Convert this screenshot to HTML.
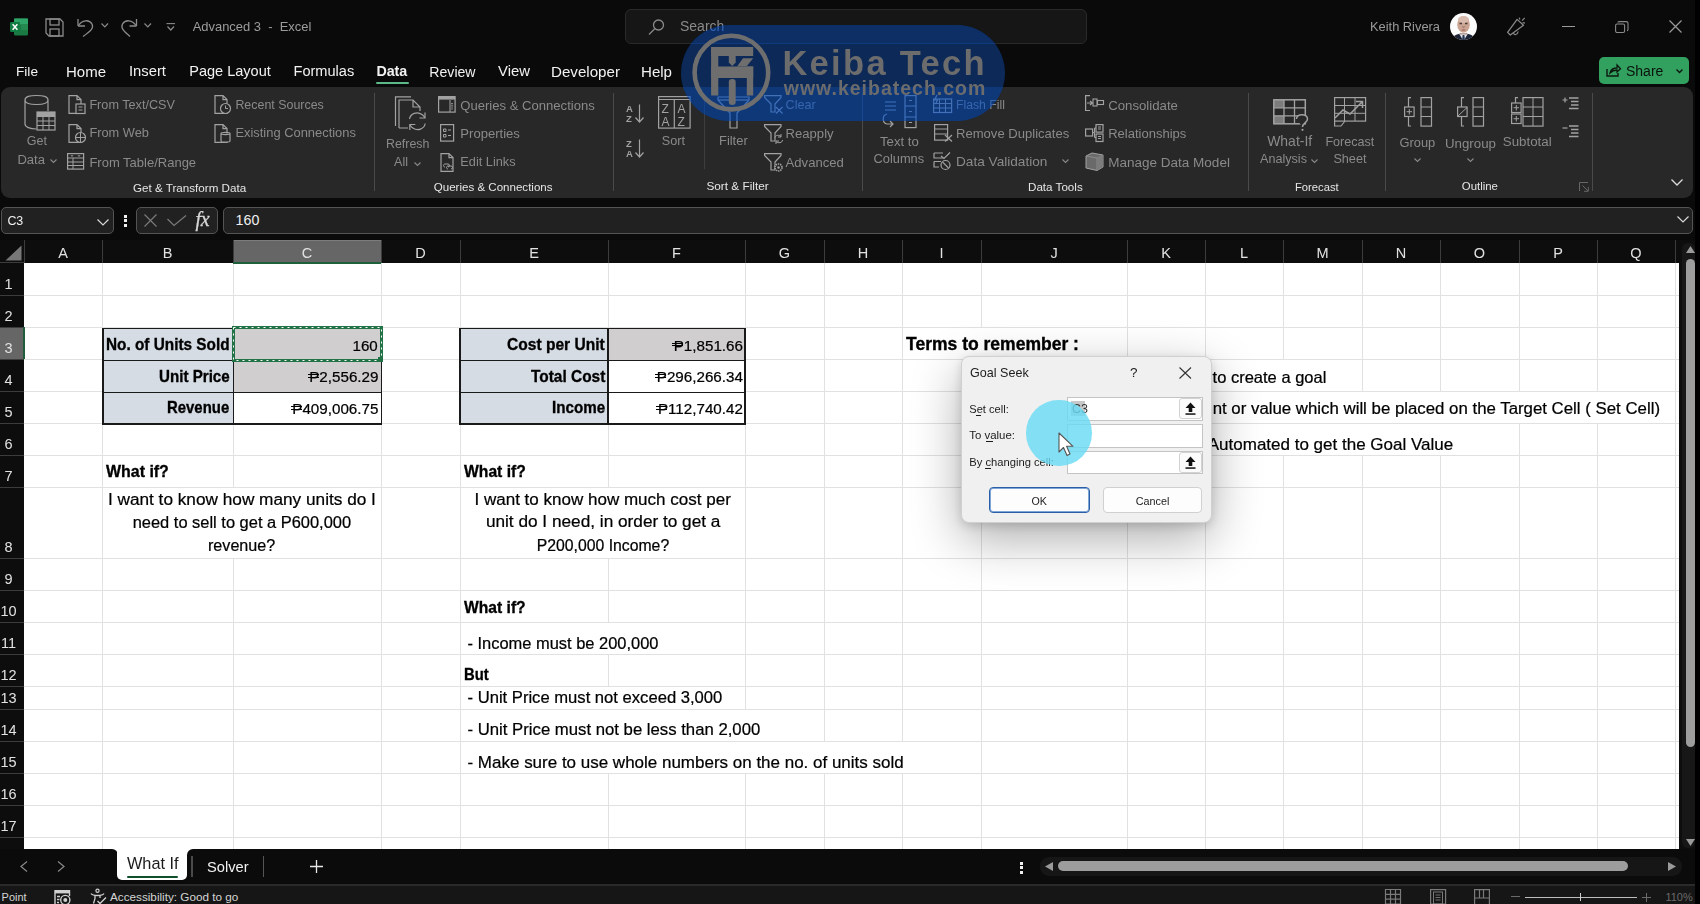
<!DOCTYPE html><html><head><meta charset="utf-8"><style>
html,body{margin:0;padding:0;width:1700px;height:904px;overflow:hidden;background:#0a0a0a;}
body{position:relative;font-family:"Liberation Sans",sans-serif;}
.t{position:absolute;white-space:pre;line-height:1;}
svg{display:block}
</style></head><body>

<svg style="position:absolute;left:10px;top:18px;overflow:visible;" width="19" height="19" viewBox="0 0 19 19"><rect x="4" y="0.5" width="14" height="17" rx="1.5" fill="#1b7a43"/>
<rect x="4" y="0.5" width="14" height="6" fill="#2fa56a"/><rect x="11" y="6" width="7" height="6" fill="#23894f"/>
<rect x="0" y="4" width="10" height="10" rx="1.2" fill="#107c41"/>
<path d="M2.6 6.3 L7.4 11.7 M7.4 6.3 L2.6 11.7" stroke="#fff" stroke-width="1.5"/></svg>
<svg style="position:absolute;left:45px;top:18px;overflow:visible;" width="19" height="19" viewBox="0 0 19 19"><path d="M1 1 H15 L18 4 V18 H4 L1 15 Z" fill="none" stroke="#8a8a8a" stroke-width="1.3"/><rect x="5" y="1" width="9" height="6" fill="none" stroke="#8a8a8a" stroke-width="1.3"/><rect x="5" y="11" width="9" height="7" fill="none" stroke="#8a8a8a" stroke-width="1.3"/></svg>
<svg style="position:absolute;left:77px;top:17px;overflow:visible;" width="30" height="20" viewBox="0 0 30 20"><path d="M1 9 L1 2 M1 9 L8 9" stroke="#8a8a8a" stroke-width="1.3" fill="none"/><path d="M1.5 8.5 C5 3 12 2 15 7 C17 11 14 14 6 19.5" stroke="#8a8a8a" stroke-width="1.3" fill="none"/><path d="M24 24" /><path d="M101 24" /></svg>
<svg style="position:absolute;left:101px;top:23px;overflow:visible;" width="8" height="5" viewBox="0 0 8 5"><path d="M0.5 0.5 L3.8 3.8 L7 0.5" stroke="#8a8a8a" stroke-width="1.2" fill="none"/></svg>
<svg style="position:absolute;left:120px;top:17px;overflow:visible;" width="18" height="20" viewBox="0 0 18 20"><path d="M16.5 9 L16.5 2 M16.5 9 L9.5 9" stroke="#8a8a8a" stroke-width="1.3" fill="none"/><path d="M16 8.5 C12.5 3 5.5 2 2.5 7 C0.5 11 3.5 14 10 19.5" stroke="#8a8a8a" stroke-width="1.3" fill="none"/></svg>
<svg style="position:absolute;left:144px;top:23px;overflow:visible;" width="8" height="5" viewBox="0 0 8 5"><path d="M0.5 0.5 L3.8 3.8 L7 0.5" stroke="#8a8a8a" stroke-width="1.2" fill="none"/></svg>
<svg style="position:absolute;left:166px;top:23px;overflow:visible;" width="10" height="9" viewBox="0 0 10 9"><path d="M0.5 0.6 H9" stroke="#8a8a8a" stroke-width="1.1"/><path d="M1.5 3.5 L4.8 7 L8 3.5" stroke="#8a8a8a" stroke-width="1.2" fill="none"/></svg>
<div class="t" style="left:192.70px;top:20.84px;font-size:12.953px;color:#9c9c9c;">Advanced 3  -  Excel</div>
<div style="position:absolute;left:625px;top:9px;width:462px;height:35px;background:#161616;border:1px solid #2a2a2a;border-radius:6px;box-sizing:border-box;"></div>
<svg style="position:absolute;left:648px;top:19px;overflow:visible;" width="17" height="17" viewBox="0 0 17 17"><circle cx="10.5" cy="6" r="5" fill="none" stroke="#8a8a8a" stroke-width="1.3"/><path d="M7 9.5 L1 15.5" stroke="#8a8a8a" stroke-width="1.3"/></svg>
<div class="t" style="left:680.00px;top:19.04px;font-size:14.013px;color:#8a8a8a;">Search</div>
<div class="t" style="left:1370.00px;top:21.42px;font-size:12.852px;color:#9a9a9a;">Keith Rivera</div>
<svg style="position:absolute;left:1450px;top:13px;overflow:visible;" width="28" height="28" viewBox="0 0 28 28"><defs><clipPath id="av"><circle cx="13.5" cy="13.5" r="13.5"/></clipPath></defs>
<circle cx="13.5" cy="13.5" r="13.5" fill="#fbfbfb"/>
<g clip-path="url(#av)"><path d="M1 29 C3 22 7 20.5 13.5 20.5 C20 20.5 24 22 26 29 Z" fill="#1c2336"/>
<path d="M9 20.5 L13.5 28 L18 20.5 Z" fill="#dfe6f0"/><path d="M12.6 22 L14.4 22 L15 28 L12 28 Z" fill="#2a3550"/>
<ellipse cx="13.5" cy="11.5" rx="6.3" ry="8.2" fill="#cba593"/><ellipse cx="13.5" cy="6.5" rx="5.5" ry="3.5" fill="#d9bcae"/>
<path d="M9.5 10.5 H12 M15 10.5 H17.5" stroke="#4a3a34" stroke-width="1.3"/><path d="M12.5 13 L13.5 15 L14.5 13" stroke="#9a7060" stroke-width="0.8" fill="none"/><ellipse cx="13.5" cy="17" rx="2.2" ry="1.1" fill="#b07a70"/>
<path d="M10 19.5 C11 20.8 16 20.8 17 19.5 V21.5 H10 Z" fill="#b89080"/></g></svg>
<svg style="position:absolute;left:1507px;top:17px;overflow:visible;" width="20" height="20" viewBox="0 0 20 20"><path d="M0.6 15.4 L10.1 2.4 L16.5 8.3 L3.3 18 Z" fill="none" stroke="#8a8a8a" stroke-width="1.25" stroke-linejoin="round"/><path d="M6.5 16.2 C7 18.2 10.5 18.2 11.2 14.5" fill="none" stroke="#8a8a8a" stroke-width="1.2"/><path d="M12.2 0.6 L12.9 2.5 M15.1 3.6 L17.7 0.9 M15.6 5.6 L17.9 6.1" stroke="#8a8a8a" stroke-width="1.2"/></svg>
<div style="position:absolute;left:1562px;top:26px;width:13px;height:1px;background:#9a9a9a;"></div>
<svg style="position:absolute;left:1615px;top:21px;overflow:visible;" width="14" height="12" viewBox="0 0 14 12"><rect x="0.6" y="3" width="9" height="8.5" rx="1.5" fill="none" stroke="#8a8a8a" stroke-width="1.1"/><path d="M3 1.5 C3 0.8 3.5 0.6 4.5 0.6 H11 C12.5 0.6 13 1 13 2.5 V8.5 C13 9.2 12.7 9.6 12 9.6" fill="none" stroke="#8a8a8a" stroke-width="1.1"/></svg>
<svg style="position:absolute;left:1669px;top:20px;overflow:visible;" width="13" height="13" viewBox="0 0 13 13"><path d="M0.5 0.5 L12.5 12.5 M12.5 0.5 L0.5 12.5" stroke="#9a9a9a" stroke-width="1.2"/></svg>
<div style="position:absolute;left:1695px;top:0px;width:5px;height:904px;background:#000;"></div>
<div class="t" style="left:16.00px;top:64.94px;font-size:13.653px;color:#f2f2f2;">File</div>
<div class="t" style="left:66.00px;top:63.81px;font-size:14.995px;color:#f2f2f2;">Home</div>
<div class="t" style="left:129.00px;top:63.98px;font-size:14.794px;color:#f2f2f2;">Insert</div>
<div class="t" style="left:189.20px;top:64.18px;font-size:14.548px;color:#f2f2f2;">Page Layout</div>
<div class="t" style="left:293.50px;top:64.15px;font-size:14.589px;color:#f2f2f2;">Formulas</div>
<div class="t" style="left:429.30px;top:64.55px;font-size:14.121px;color:#f2f2f2;">Review</div>
<div class="t" style="left:498.00px;top:63.90px;font-size:14.888px;color:#f2f2f2;">View</div>
<div class="t" style="left:551.00px;top:63.69px;font-size:15.138px;color:#f2f2f2;">Developer</div>
<div class="t" style="left:641.00px;top:63.74px;font-size:15.073px;color:#f2f2f2;">Help</div>
<div class="t" style="left:376.40px;top:64.43px;font-size:14.256px;color:#f2f2f2;font-weight:bold;">Data</div>
<div style="position:absolute;left:376px;top:82px;width:33px;height:2px;background:#5bb98a;border-radius:1px;"></div>
<div style="position:absolute;left:1599px;top:57px;width:90px;height:27px;background:#32a05e;border-radius:5px;"></div>
<svg style="position:absolute;left:1606px;top:64px;overflow:visible;" width="15" height="13" viewBox="0 0 15 13"><path d="M1 5 V12 H12 V9" fill="none" stroke="#0d1a10" stroke-width="1.4"/><path d="M4 9 C5 5 8 4 11 4 L11 1 L14.5 4.7 L11 8 V6 C8.5 6 6 7 4 9 Z" fill="none" stroke="#0d1a10" stroke-width="1.3"/></svg>
<div class="t" style="left:1626.00px;top:64.34px;font-size:14.015px;color:#0b130d;">Share</div>
<svg style="position:absolute;left:1676px;top:69px;overflow:visible;" width="7" height="5" viewBox="0 0 7 5"><path d="M0.5 0.5 L3.5 3.5 L6.5 0.5" stroke="#0b130d" stroke-width="1.3" fill="none"/></svg>
<div style="position:absolute;left:1px;top:87px;width:1692px;height:111px;background:#282828;border-radius:9px;"></div>
<div style="position:absolute;left:374px;top:93px;width:1px;height:98px;background:#4a4a4a;"></div>
<div style="position:absolute;left:613px;top:93px;width:1px;height:98px;background:#4a4a4a;"></div>
<div style="position:absolute;left:862px;top:93px;width:1px;height:98px;background:#4a4a4a;"></div>
<div style="position:absolute;left:1248px;top:93px;width:1px;height:98px;background:#4a4a4a;"></div>
<div style="position:absolute;left:1385px;top:93px;width:1px;height:98px;background:#4a4a4a;"></div>
<div style="position:absolute;left:1592px;top:93px;width:1px;height:98px;background:#4a4a4a;"></div>
<div style="position:absolute;left:704px;top:98px;width:1px;height:71px;background:#3e3e3e;"></div>
<div class="t" style="left:133.00px;top:181.64px;font-size:11.650px;color:#e6e6e6;">Get &amp; Transform Data</div>
<div class="t" style="left:433.80px;top:181.52px;font-size:11.553px;color:#e6e6e6;">Queries &amp; Connections</div>
<div class="t" style="left:706.40px;top:181.31px;font-size:11.802px;color:#e6e6e6;">Sort &amp; Filter</div>
<div class="t" style="left:1028.00px;top:181.14px;font-size:11.643px;color:#e6e6e6;">Data Tools</div>
<div class="t" style="left:1295.00px;top:181.89px;font-size:11.233px;color:#e6e6e6;">Forecast</div>
<div class="t" style="left:1461.80px;top:181.23px;font-size:11.425px;color:#e6e6e6;">Outline</div>
<svg style="position:absolute;left:24px;top:95px;overflow:visible;" width="32" height="37" viewBox="0 0 32 37"><path d="M1 5 V29 C1 32 6 34 12.5 34 M1 5 C1 1.5 6 0.5 12.5 0.5 C19 0.5 24 1.5 24 5 C24 8 19 9.5 12.5 9.5 C6 9.5 1 8 1 5 M24 5 V16" fill="none" stroke="#a2a2a2" stroke-width="1.2"/>
<rect x="13" y="17" width="18" height="18" fill="#282828" stroke="#a2a2a2" stroke-width="1.2"/><path d="M13 21.5 H31 M13 26 H31 M13 30.5 H31 M19 17 V35 M25 17 V35" stroke="#a2a2a2" stroke-width="1"/><rect x="13" y="17" width="18" height="4.5" fill="#a2a2a2"/></svg>
<div class="t" style="left:26.80px;top:135.19px;font-size:12.532px;color:#8a8a8a;">Get</div>
<div class="t" style="left:17.40px;top:152.64px;font-size:13.066px;color:#8a8a8a;">Data</div>
<svg style="position:absolute;left:50px;top:159px;overflow:visible;" width="7" height="4" viewBox="0 0 7 4"><path d="M0.5 0.5 L3.5 3.5 L6.5 0.5" stroke="#8a8a8a" stroke-width="1.1" fill="none"/></svg>
<svg style="position:absolute;left:68px;top:95px;overflow:visible;" width="18" height="19" viewBox="0 0 18 19"><path d="M1 0.6 H9 L13 4.6 V18.4 H1 Z M9 0.6 V4.6 H13" fill="none" stroke="#a2a2a2" stroke-width="1.2"/><rect x="8" y="9" width="9" height="9.5" fill="#282828" stroke="#a2a2a2" stroke-width="1.2"/><path d="M10.5 12 H14.5 M10.5 15 H14.5" stroke="#a2a2a2" stroke-width="1"/></svg>
<svg style="position:absolute;left:68px;top:124px;overflow:visible;" width="18" height="19" viewBox="0 0 18 19"><path d="M1 0.6 H9 L13 4.6 V18.4 H1 Z M9 0.6 V4.6 H13" fill="none" stroke="#a2a2a2" stroke-width="1.2"/><circle cx="12.5" cy="13.5" r="5" fill="#282828" stroke="#a2a2a2" stroke-width="1.2"/><path d="M7.5 13.5 H17.5 M12.5 8.5 V18.5" stroke="#a2a2a2" stroke-width="1"/></svg>
<svg style="position:absolute;left:67px;top:153px;overflow:visible;" width="18" height="17" viewBox="0 0 18 17"><rect x="0.6" y="0.6" width="16" height="15.5" fill="none" stroke="#a2a2a2" stroke-width="1.2"/><path d="M0.6 5 H16.6 M0.6 9 H16.6 M0.6 12.5 H16.6 M6 5 V16" stroke="#a2a2a2" stroke-width="1"/><path d="M4 2 L5 3.5 L6 2 M11 2 L12 3.5 L13 2" stroke="#a2a2a2" stroke-width="0.8" fill="none"/></svg>
<div class="t" style="left:89.40px;top:98.88px;font-size:12.661px;color:#8a8a8a;">From Text/CSV</div>
<div class="t" style="left:89.40px;top:127.15px;font-size:12.820px;color:#8a8a8a;">From Web</div>
<div class="t" style="left:89.40px;top:155.99px;font-size:13.012px;color:#8a8a8a;">From Table/Range</div>
<svg style="position:absolute;left:214px;top:95px;overflow:visible;" width="18" height="19" viewBox="0 0 18 19"><path d="M1 0.6 H9 L13 4.6 V18.4 H1 Z M9 0.6 V4.6 H13" fill="none" stroke="#a2a2a2" stroke-width="1.2"/><circle cx="11.5" cy="13.5" r="5" fill="#282828" stroke="#a2a2a2" stroke-width="1.2"/><path d="M11.5 10.5 V13.5 H14" stroke="#a2a2a2" stroke-width="1" fill="none"/></svg>
<svg style="position:absolute;left:214px;top:124px;overflow:visible;" width="18" height="19" viewBox="0 0 18 19"><path d="M1 0.6 H9 L13 4.6 V18.4 H1 Z M9 0.6 V4.6 H13" fill="none" stroke="#a2a2a2" stroke-width="1.2"/><path d="M7 9.5 C7 8 16 8 16 9.5 V17 C16 18.5 7 18.5 7 17 Z M7 9.5 C7 11 16 11 16 9.5" fill="#282828" stroke="#a2a2a2" stroke-width="1.2"/></svg>
<div class="t" style="left:235.40px;top:99.07px;font-size:12.439px;color:#8a8a8a;">Recent Sources</div>
<div class="t" style="left:235.40px;top:127.07px;font-size:12.914px;color:#8a8a8a;">Existing Connections</div>
<svg style="position:absolute;left:394px;top:96px;overflow:visible;" width="34" height="35" viewBox="0 0 34 35"><path d="M1.5 30 V0.8 H17" fill="none" stroke="#a2a2a2" stroke-width="1.2"/><path d="M5 32 V4 H19 L26 11 V15 M19 4 V11 H26 M5 32 H14" fill="none" stroke="#a2a2a2" stroke-width="1.2"/>
<path d="M15.5 23 C16.5 17.5 23 15 28 18.5 C29.3 19.4 30.2 20.5 30.8 21.8" fill="none" stroke="#a2a2a2" stroke-width="1.2"/><path d="M31 16.5 V22 H25.5" fill="none" stroke="#a2a2a2" stroke-width="1.2"/>
<path d="M31.2 27.5 C30.2 33 23.8 35.5 18.8 32 C17.5 31.1 16.6 30 16 28.7" fill="none" stroke="#a2a2a2" stroke-width="1.2"/><path d="M15.8 34 V28.5 H21.3" fill="none" stroke="#a2a2a2" stroke-width="1.2"/></svg>
<div class="t" style="left:386.00px;top:138.48px;font-size:12.423px;color:#8a8a8a;">Refresh</div>
<div class="t" style="left:394.00px;top:156.34px;font-size:12.597px;color:#8a8a8a;">All</div>
<svg style="position:absolute;left:414px;top:162px;overflow:visible;" width="7" height="4" viewBox="0 0 7 4"><path d="M0.5 0.5 L3.5 3.5 L6.5 0.5" stroke="#8a8a8a" stroke-width="1.1" fill="none"/></svg>
<svg style="position:absolute;left:438px;top:96px;overflow:visible;" width="18" height="17" viewBox="0 0 18 17"><rect x="0.6" y="0.6" width="16.5" height="15.5" fill="none" stroke="#a2a2a2" stroke-width="1.2"/><rect x="0.6" y="0.6" width="16.5" height="3" fill="#a2a2a2"/><path d="M12 4 V16" stroke="#a2a2a2" stroke-width="1"/><path d="M14 7 V14" stroke="#a2a2a2" stroke-width="1.5" stroke-dasharray="1.2 1"/></svg>
<svg style="position:absolute;left:440px;top:124px;overflow:visible;" width="15" height="18" viewBox="0 0 15 18"><rect x="0.6" y="0.6" width="13" height="16.5" fill="none" stroke="#a2a2a2" stroke-width="1.2"/><path d="M3.5 5 H6 V7.5 H3.5 Z M3.5 10.5 H6 V13 H3.5 Z M8 6 H11 M8 11.5 H11" stroke="#a2a2a2" stroke-width="1" fill="none"/></svg>
<svg style="position:absolute;left:440px;top:153px;overflow:visible;" width="18" height="19" viewBox="0 0 18 19"><path d="M1 0.6 H9 L13 4.6 V18.4 H1 Z M9 0.6 V4.6 H13" fill="none" stroke="#a2a2a2" stroke-width="1.2"/><path d="M5 14 C3 14 3 11 5 11 H8 C10 11 10 14 8 14 M8 16 C6 16 6 13 8 13 H11 C13 13 13 16 11 16" fill="none" stroke="#a2a2a2" stroke-width="1"/></svg>
<div class="t" style="left:460.30px;top:98.62px;font-size:13.089px;color:#8a8a8a;">Queries &amp; Connections</div>
<div class="t" style="left:460.30px;top:126.91px;font-size:13.099px;color:#8a8a8a;">Properties</div>
<div class="t" style="left:460.30px;top:156.20px;font-size:12.755px;color:#8a8a8a;">Edit Links</div>
<svg style="position:absolute;left:626px;top:104px;overflow:visible;" width="20" height="19" viewBox="0 0 20 19"><text x="0" y="8" font-family="Liberation Sans" font-size="9.5" font-weight="bold" fill="#a2a2a2">A</text><text x="0" y="18" font-family="Liberation Sans" font-size="9.5" font-weight="bold" fill="#a2a2a2">Z</text><path d="M13.5 0.5 V18 M9.5 13.5 L13.5 18 L17.5 13.5" fill="none" stroke="#a2a2a2" stroke-width="1.2"/></svg>
<svg style="position:absolute;left:626px;top:139px;overflow:visible;" width="20" height="19" viewBox="0 0 20 19"><text x="0" y="8" font-family="Liberation Sans" font-size="9.5" font-weight="bold" fill="#a2a2a2">Z</text><text x="0" y="18" font-family="Liberation Sans" font-size="9.5" font-weight="bold" fill="#a2a2a2">A</text><path d="M13.5 0.5 V18 M9.5 13.5 L13.5 18 L17.5 13.5" fill="none" stroke="#a2a2a2" stroke-width="1.2"/></svg>
<svg style="position:absolute;left:658px;top:96px;overflow:visible;" width="33" height="33" viewBox="0 0 33 33"><rect x="0.6" y="0.6" width="31.5" height="31.5" fill="none" stroke="#a2a2a2" stroke-width="1.2"/><path d="M0.6 3.5 H32 M16.3 3.5 V32" stroke="#a2a2a2" stroke-width="1.2"/>
<text x="3.5" y="17" font-family="Liberation Sans" font-size="12" fill="#a2a2a2">Z</text><text x="3.5" y="30" font-family="Liberation Sans" font-size="12" fill="#a2a2a2">A</text><text x="19.5" y="17" font-family="Liberation Sans" font-size="12" fill="#a2a2a2">A</text><text x="19.5" y="30" font-family="Liberation Sans" font-size="12" fill="#a2a2a2">Z</text></svg>
<div class="t" style="left:661.80px;top:135.49px;font-size:12.650px;color:#8a8a8a;">Sort</div>
<svg style="position:absolute;left:717px;top:96px;overflow:visible;" width="33" height="33" viewBox="0 0 33 33"><path d="M1 1 H32 V4 L20 17 V32 H13 V17 L1 4 Z" fill="none" stroke="#a2a2a2" stroke-width="1.2"/><path d="M1 4 H32" stroke="#a2a2a2" stroke-width="1.2"/></svg>
<div class="t" style="left:719.00px;top:135.27px;font-size:12.915px;color:#8a8a8a;">Filter</div>
<svg style="position:absolute;left:764px;top:95px;overflow:visible;" width="20" height="19" viewBox="0 0 20 19"><path d="M0.6 0.6 H17 V2.5 L11 9 V17 H7 V9 L0.6 2.5 Z" fill="none" stroke="#a2a2a2" stroke-width="1.2"/><path d="M12 12 L18.5 18.5 M18.5 12 L12 18.5" stroke="#a2a2a2" stroke-width="1.1"/></svg>
<svg style="position:absolute;left:764px;top:124px;overflow:visible;" width="20" height="19" viewBox="0 0 20 19"><path d="M0.6 0.6 H17 V2.5 L11 9 V17 H7 V9 L0.6 2.5 Z" fill="none" stroke="#a2a2a2" stroke-width="1.2"/><path d="M11 14 C11 11 15 10.5 17 12.5 M17 10 V13 H14 M18.5 16 C18.5 19 14 19.5 12 17.5 M12 20 V17 H15" fill="#282828" stroke="#a2a2a2" stroke-width="1"/></svg>
<svg style="position:absolute;left:764px;top:153px;overflow:visible;" width="20" height="19" viewBox="0 0 20 19"><path d="M0.6 0.6 H17 V2.5 L11 9 V17 H7 V9 L0.6 2.5 Z" fill="none" stroke="#a2a2a2" stroke-width="1.2"/><circle cx="14.5" cy="14.5" r="3.5" fill="#282828" stroke="#a2a2a2" stroke-width="1.6" stroke-dasharray="1.4 0.8"/><circle cx="14.5" cy="14.5" r="1.2" fill="#a2a2a2"/></svg>
<div class="t" style="left:785.60px;top:99.07px;font-size:12.554px;color:#8a8a8a;">Clear</div>
<div class="t" style="left:785.60px;top:126.93px;font-size:13.083px;color:#8a8a8a;">Reapply</div>
<div class="t" style="left:785.60px;top:155.92px;font-size:13.085px;color:#8a8a8a;">Advanced</div>
<svg style="position:absolute;left:881px;top:95px;overflow:visible;" width="36" height="34" viewBox="0 0 36 34"><path d="M4 7 H15 M4 11 H15 M4 15 H15" stroke="#a2a2a2" stroke-width="1.2"/><path d="M6 19 C1 20 1 28 6 29 H12 M9 26 L12 29 L9 32" fill="none" stroke="#a2a2a2" stroke-width="1.2"/><rect x="24" y="0.6" width="11" height="32" fill="none" stroke="#a2a2a2" stroke-width="1.2"/><path d="M24 11 H35 M24 22 H35 M28 5.5 H31 M28 16.5 H31 M28 27.5 H31" stroke="#a2a2a2" stroke-width="1"/></svg>
<div class="t" style="left:880.00px;top:135.05px;font-size:13.171px;color:#8a8a8a;">Text to</div>
<div class="t" style="left:873.60px;top:152.94px;font-size:12.824px;color:#8a8a8a;">Columns</div>
<svg style="position:absolute;left:933px;top:95px;overflow:visible;" width="20" height="18" viewBox="0 0 20 18"><rect x="0.6" y="4" width="18" height="13.5" fill="none" stroke="#a2a2a2" stroke-width="1.2"/><path d="M0.6 8.5 H18.6 M0.6 13 H18.6 M6.5 4 V17.5 M12.5 4 V17.5" stroke="#a2a2a2" stroke-width="1"/><path d="M4 0 L1.5 5 H4.5 L2.5 9" fill="none" stroke="#a2a2a2" stroke-width="1.2"/></svg>
<svg style="position:absolute;left:934px;top:124px;overflow:visible;" width="19" height="18" viewBox="0 0 19 18"><rect x="0.6" y="0.6" width="13" height="15.5" fill="none" stroke="#a2a2a2" stroke-width="1.2"/><path d="M0.6 5 H13.6 M0.6 10 H13.6" stroke="#a2a2a2" stroke-width="1"/><path d="M11 11 L18 17.5 M18 11 L11 17.5" stroke="#a2a2a2" stroke-width="1.2"/></svg>
<svg style="position:absolute;left:933px;top:152px;overflow:visible;" width="19" height="18" viewBox="0 0 19 18"><path d="M1 1 H10 M1 1 V6 H10 M1 9.5 H8 M1 9.5 V15 H6" fill="none" stroke="#a2a2a2" stroke-width="1.2"/><path d="M8 4 L11 6.5 L17 0.5" fill="none" stroke="#a2a2a2" stroke-width="1.2"/><circle cx="12.5" cy="13" r="4.5" fill="none" stroke="#a2a2a2" stroke-width="1.2"/><path d="M9.5 10 L15.5 16" stroke="#a2a2a2" stroke-width="1.1"/></svg>
<div class="t" style="left:956.00px;top:99.33px;font-size:12.248px;color:#8a8a8a;">Flash Fill</div>
<div class="t" style="left:956.00px;top:126.93px;font-size:13.079px;color:#8a8a8a;">Remove Duplicates</div>
<div class="t" style="left:956.00px;top:155.45px;font-size:13.640px;color:#8a8a8a;">Data Validation</div>
<svg style="position:absolute;left:1062px;top:159px;overflow:visible;" width="7" height="4" viewBox="0 0 7 4"><path d="M0.5 0.5 L3.5 3.5 L6.5 0.5" stroke="#8a8a8a" stroke-width="1.1" fill="none"/></svg>
<svg style="position:absolute;left:1085px;top:95px;overflow:visible;" width="19" height="17" viewBox="0 0 19 17"><path d="M5 0.6 H0.6 V15.5 H5" fill="none" stroke="#a2a2a2" stroke-width="1.2"/><path d="M2 8 H7 M5 6 L7.5 8 L5 10" fill="none" stroke="#a2a2a2" stroke-width="1.1"/><rect x="8" y="4" width="4" height="7" fill="none" stroke="#a2a2a2" stroke-width="1.1"/><rect x="12.5" y="5.5" width="6" height="4" fill="none" stroke="#a2a2a2" stroke-width="1.1"/></svg>
<svg style="position:absolute;left:1085px;top:124px;overflow:visible;" width="19" height="18" viewBox="0 0 19 18"><rect x="0.6" y="5" width="7" height="7" fill="none" stroke="#a2a2a2" stroke-width="1.2"/><rect x="11" y="0.6" width="7" height="7.5" fill="none" stroke="#a2a2a2" stroke-width="1.2"/><rect x="11" y="10" width="7" height="7.5" fill="none" stroke="#a2a2a2" stroke-width="1.2"/><path d="M7.6 8.5 H9.5 V4 H11 M9.5 8.5 V13.5 H11 M13 3 H16 M13 5 H16 M13 12.5 H16 M13 14.5 H16" stroke="#a2a2a2" stroke-width="1" fill="none"/></svg>
<svg style="position:absolute;left:1085px;top:152px;overflow:visible;" width="19" height="19" viewBox="0 0 19 19"><path d="M1 4 L7 1 L18 3 V15 L12 18.5 L1 16 Z" fill="#6a6a6a" stroke="#a2a2a2" stroke-width="1"/><path d="M1 4 L12 6 L18 3 M12 6 V18.5" stroke="#8a8a8a" stroke-width="1" fill="none"/><path d="M12 6 L18 3 V15 L12 18.5 Z" fill="#7c7c7c"/></svg>
<div class="t" style="left:1108.20px;top:98.51px;font-size:13.216px;color:#8a8a8a;">Consolidate</div>
<div class="t" style="left:1108.20px;top:126.97px;font-size:13.026px;color:#8a8a8a;">Relationships</div>
<div class="t" style="left:1108.20px;top:155.55px;font-size:13.525px;color:#8a8a8a;">Manage Data Model</div>
<svg style="position:absolute;left:1273px;top:99px;overflow:visible;" width="36" height="32" viewBox="0 0 36 32"><rect x="1" y="1" width="10" height="7.8" fill="#7c7c7c"/><rect x="1" y="16.8" width="10" height="7.6" fill="#7c7c7c"/><rect x="0.8" y="0.8" width="31.5" height="24" fill="none" stroke="#a2a2a2" stroke-width="1.5"/><path d="M0.8 8.8 H32.3 M0.8 16.8 H32.3 M11 0.8 V24.8 M21.5 0.8 V24.8" stroke="#a2a2a2" stroke-width="1.3"/>
<path d="M23.5 20 C23.5 14.2 34.5 14.2 34.5 20 C34.5 23.8 29.5 24 29.5 28" fill="#282828" stroke="#a2a2a2" stroke-width="1.5"/><circle cx="29.5" cy="30.8" r="1.1" fill="#a2a2a2"/></svg>
<div class="t" style="left:1267.20px;top:134.58px;font-size:13.964px;color:#8a8a8a;">What-If</div>
<div class="t" style="left:1260.00px;top:153.22px;font-size:12.622px;color:#8a8a8a;">Analysis</div>
<svg style="position:absolute;left:1311px;top:159px;overflow:visible;" width="7" height="4" viewBox="0 0 7 4"><path d="M0.5 0.5 L3.5 3.5 L6.5 0.5" stroke="#8a8a8a" stroke-width="1.1" fill="none"/></svg>
<svg style="position:absolute;left:1334px;top:97px;overflow:visible;" width="33" height="30" viewBox="0 0 33 30"><rect x="0.6" y="0.6" width="31" height="23.5" fill="none" stroke="#a2a2a2" stroke-width="1.2"/><path d="M0.6 8.5 H31.6 M0.6 16.3 H31.6 M10.5 0.6 V24 M21 0.6 V24" stroke="#a2a2a2" stroke-width="1"/><path d="M1 21 L9 13 L16 17 L28 5 M22 4.5 H28.5 V11" fill="none" stroke="#a2a2a2" stroke-width="1.5"/><path d="M0.6 24 V29 H7 L11 24" fill="none" stroke="#a2a2a2" stroke-width="1.2"/></svg>
<div class="t" style="left:1325.40px;top:135.74px;font-size:12.596px;color:#8a8a8a;">Forecast</div>
<div class="t" style="left:1333.40px;top:153.18px;font-size:12.666px;color:#8a8a8a;">Sheet</div>
<svg style="position:absolute;left:1404px;top:97px;overflow:visible;" width="29" height="30" viewBox="0 0 29 30"><path d="M7 0.6 H4.5 V29 H7" fill="none" stroke="#a2a2a2" stroke-width="1.2"/><rect x="17" y="0.6" width="10.5" height="28.5" fill="none" stroke="#a2a2a2" stroke-width="1.2"/><path d="M17 10 H27.5 M17 19.5 H27.5" stroke="#a2a2a2" stroke-width="1"/><rect x="0.6" y="10" width="9.5" height="9.5" fill="#282828" stroke="#a2a2a2" stroke-width="1.2"/><path d="M5.3 12 V17.5 M2.6 14.7 H8" stroke="#a2a2a2" stroke-width="1"/></svg>
<div class="t" style="left:1399.50px;top:137.10px;font-size:12.881px;color:#8a8a8a;">Group</div>
<svg style="position:absolute;left:1414px;top:158px;overflow:visible;" width="7" height="4" viewBox="0 0 7 4"><path d="M0.5 0.5 L3.5 3.5 L6.5 0.5" stroke="#8a8a8a" stroke-width="1.1" fill="none"/></svg>
<svg style="position:absolute;left:1457px;top:97px;overflow:visible;" width="29" height="30" viewBox="0 0 29 30"><path d="M7 0.6 H4.5 V29 H7" fill="none" stroke="#a2a2a2" stroke-width="1.2"/><rect x="16" y="0.6" width="10.5" height="28.5" fill="none" stroke="#a2a2a2" stroke-width="1.2"/><path d="M16 10 H26.5 M16 19.5 H26.5" stroke="#a2a2a2" stroke-width="1"/><rect x="0.6" y="10" width="9.5" height="9.5" fill="#282828" stroke="#a2a2a2" stroke-width="1.2"/><path d="M1 19 L10 10.5" stroke="#a2a2a2" stroke-width="1"/></svg>
<div class="t" style="left:1445.00px;top:136.75px;font-size:13.295px;color:#8a8a8a;">Ungroup</div>
<svg style="position:absolute;left:1467px;top:158px;overflow:visible;" width="7" height="4" viewBox="0 0 7 4"><path d="M0.5 0.5 L3.5 3.5 L6.5 0.5" stroke="#8a8a8a" stroke-width="1.1" fill="none"/></svg>
<svg style="position:absolute;left:1511px;top:97px;overflow:visible;" width="33" height="30" viewBox="0 0 33 30"><path d="M7 0.6 H4.5 V6" fill="none" stroke="#a2a2a2" stroke-width="1.2"/><rect x="12" y="0.6" width="20" height="28.5" fill="none" stroke="#a2a2a2" stroke-width="1.2"/><path d="M12 10 H32 M12 19.5 H32 M22 0.6 V29" stroke="#a2a2a2" stroke-width="1"/><rect x="0.6" y="6" width="9.5" height="9.5" fill="#282828" stroke="#a2a2a2" stroke-width="1.2"/><rect x="0.6" y="17" width="9.5" height="9.5" fill="#282828" stroke="#a2a2a2" stroke-width="1.2"/><path d="M5.3 8 V13.5 M2.6 10.7 H8 M5.3 19 V24.5 M2.6 21.7 H8" stroke="#a2a2a2" stroke-width="1"/></svg>
<div class="t" style="left:1502.80px;top:135.12px;font-size:13.326px;color:#8a8a8a;">Subtotal</div>
<svg style="position:absolute;left:1562px;top:97px;overflow:visible;" width="18" height="14" viewBox="0 0 18 14"><path d="M0.5 3 H5.5 M3 0.5 V5.5" stroke="#a2a2a2" stroke-width="1.2"/><path d="M7 1 H16.5 M9 4.5 H16.5 M9 8 H16.5 M7 11.5 H16.5" stroke="#a2a2a2" stroke-width="1.4"/></svg>
<svg style="position:absolute;left:1562px;top:125px;overflow:visible;" width="18" height="14" viewBox="0 0 18 14"><path d="M0.5 3 H5.5" stroke="#a2a2a2" stroke-width="1.2"/><path d="M7 1 H16.5 M9 4.5 H16.5 M9 8 H16.5 M7 11.5 H16.5" stroke="#a2a2a2" stroke-width="1.4"/></svg>
<svg style="position:absolute;left:1579px;top:182px;overflow:visible;" width="10" height="10" viewBox="0 0 10 10"><path d="M0.5 9 V0.5 H9 M3.5 3.5 L9 9 M5 9.3 H9.3 V5" fill="none" stroke="#666" stroke-width="1"/></svg>
<svg style="position:absolute;left:1671px;top:179px;overflow:visible;" width="12" height="7" viewBox="0 0 12 7"><path d="M0.5 0.5 L6 6 L11.5 0.5" stroke="#dcdcdc" stroke-width="1.3" fill="none"/></svg>
<div style="position:absolute;left:681px;top:25px;width:324px;height:96px;background:#2a64c0;border-radius:48px;mix-blend-mode:color;opacity:0.75;"></div>
<div style="position:absolute;left:681px;top:25px;width:324px;height:96px;background:rgba(20,68,140,0.55);border-radius:48px;"></div>
<svg style="position:absolute;left:680px;top:20px;overflow:visible;" width="120" height="105" viewBox="0 0 120 105"><circle cx="51.4" cy="52.6" r="36.8" fill="none" stroke="#6e6e6e" stroke-width="4.6"/>
<g fill="#6e6e6e"><rect x="31.1" y="27" width="42.1" height="9"/><rect x="31.1" y="27" width="7.2" height="48.5"/>
<path d="M48.8 36 H55.7 V42.5 L52.2 46 L48.8 42.5 Z"/><path d="M63 38.3 H73.2 L66.5 46.6 H57 Z"/>
<rect x="31.1" y="46.5" width="42.1" height="11.5"/><rect x="66.8" y="46.5" width="6.4" height="29"/><rect x="48.8" y="59" width="6.9" height="26" rx="3.2"/></g></svg>
<div class="t" style="left:782.40px;top:46.40px;font-size:34.500px;color:#6c6c6c;font-weight:bold;letter-spacing:2.312px;">Keiba Tech</div>
<div class="t" style="left:783.80px;top:78.69px;font-size:19.500px;color:#6c6c6c;font-weight:bold;letter-spacing:0.989px;">www.keibatech.com</div>
<div style="position:absolute;left:1px;top:207px;width:113px;height:27px;background:#212121;border:1px solid #545454;border-radius:5px;box-sizing:border-box;"></div>
<div class="t" style="left:7.40px;top:214.87px;font-size:12.438px;color:#f0f0f0;">C3</div>
<svg style="position:absolute;left:97px;top:219px;overflow:visible;" width="12" height="7" viewBox="0 0 12 7"><path d="M0.5 0.5 L6 6 L11.5 0.5" stroke="#d8d8d8" stroke-width="1.2" fill="none"/></svg>
<div style="position:absolute;left:124px;top:215px;width:3px;height:3px;background:#f0f0f0;"></div>
<div style="position:absolute;left:124px;top:219px;width:3px;height:3px;background:#f0f0f0;"></div>
<div style="position:absolute;left:124px;top:224px;width:3px;height:3px;background:#f0f0f0;"></div>
<div style="position:absolute;left:136px;top:207px;width:82px;height:27px;background:#212121;border:1px solid #545454;border-radius:5px;box-sizing:border-box;"></div>
<svg style="position:absolute;left:144px;top:214px;overflow:visible;" width="13" height="13" viewBox="0 0 13 13"><path d="M0.5 0.5 L12.5 12.5 M12.5 0.5 L0.5 12.5" stroke="#7a7a7a" stroke-width="1.2"/></svg>
<svg style="position:absolute;left:167px;top:215px;overflow:visible;" width="20" height="11" viewBox="0 0 20 11"><path d="M0.5 4 L7 10.5 L19 0.5" stroke="#7a7a7a" stroke-width="1.2" fill="none"/></svg>
<div class="t" style="left:195.5px;top:208.5px;font-family:'Liberation Serif',serif;font-style:italic;font-size:20px;color:#d8d8d8;letter-spacing:-0.3px;-webkit-text-stroke:0.3px #d8d8d8;">fx</div>
<div style="position:absolute;left:223px;top:207px;width:1470px;height:27px;background:#212121;border:1px solid #545454;border-radius:5px;box-sizing:border-box;"></div>
<div class="t" style="left:235.60px;top:213.33px;font-size:14.265px;color:#f0f0f0;">160</div>
<svg style="position:absolute;left:1677px;top:216px;overflow:visible;" width="12" height="7" viewBox="0 0 12 7"><path d="M0.5 0.5 L6 6 L11.5 0.5" stroke="#d8d8d8" stroke-width="1.2" fill="none"/></svg>
<div style="position:absolute;left:0px;top:240px;width:1680px;height:23px;background:#0d0d0d;"></div>
<div style="position:absolute;left:0px;top:263px;width:24px;height:586px;background:#0d0d0d;"></div>
<div style="position:absolute;left:233px;top:240px;width:148px;height:23px;background:#666;border-top:1px solid #7c7c7c;border-left:1px solid #8a8a8a;box-sizing:border-box;"></div>
<div style="position:absolute;left:0px;top:327px;width:24px;height:32px;background:#666;border-top:1px solid #7c7c7c;box-sizing:border-box;"></div>
<svg style="position:absolute;left:5px;top:245px;overflow:visible;" width="17" height="16" viewBox="0 0 17 16"><path d="M16.5 0.5 V15.5 H0.5 Z" fill="#777"/></svg>
<div style="position:absolute;left:102px;top:240px;width:1px;height:23px;background:#3c3c3c;"></div>
<div class="t" style="left:58.16px;top:245.73px;font-size:14.500px;color:#e2e2e2;">A</div>
<div style="position:absolute;left:233px;top:240px;width:1px;height:23px;background:#3c3c3c;"></div>
<div class="t" style="left:162.66px;top:245.73px;font-size:14.500px;color:#e2e2e2;">B</div>
<div style="position:absolute;left:381px;top:240px;width:1px;height:23px;background:#3c3c3c;"></div>
<div class="t" style="left:301.76px;top:245.73px;font-size:14.500px;color:#e2e2e2;">C</div>
<div style="position:absolute;left:460px;top:240px;width:1px;height:23px;background:#3c3c3c;"></div>
<div class="t" style="left:415.26px;top:245.73px;font-size:14.500px;color:#e2e2e2;">D</div>
<div style="position:absolute;left:608px;top:240px;width:1px;height:23px;background:#3c3c3c;"></div>
<div class="t" style="left:529.16px;top:245.73px;font-size:14.500px;color:#e2e2e2;">E</div>
<div style="position:absolute;left:745px;top:240px;width:1px;height:23px;background:#3c3c3c;"></div>
<div class="t" style="left:672.07px;top:245.73px;font-size:14.500px;color:#e2e2e2;">F</div>
<div style="position:absolute;left:824px;top:240px;width:1px;height:23px;background:#3c3c3c;"></div>
<div class="t" style="left:778.86px;top:245.73px;font-size:14.500px;color:#e2e2e2;">G</div>
<div style="position:absolute;left:902px;top:240px;width:1px;height:23px;background:#3c3c3c;"></div>
<div class="t" style="left:857.76px;top:245.73px;font-size:14.500px;color:#e2e2e2;">H</div>
<div style="position:absolute;left:981px;top:240px;width:1px;height:23px;background:#3c3c3c;"></div>
<div class="t" style="left:939.49px;top:245.73px;font-size:14.500px;color:#e2e2e2;">I</div>
<div style="position:absolute;left:1127px;top:240px;width:1px;height:23px;background:#3c3c3c;"></div>
<div class="t" style="left:1050.38px;top:245.73px;font-size:14.500px;color:#e2e2e2;">J</div>
<div style="position:absolute;left:1205px;top:240px;width:1px;height:23px;background:#3c3c3c;"></div>
<div class="t" style="left:1161.16px;top:245.73px;font-size:14.500px;color:#e2e2e2;">K</div>
<div style="position:absolute;left:1283px;top:240px;width:1px;height:23px;background:#3c3c3c;"></div>
<div class="t" style="left:1239.97px;top:245.73px;font-size:14.500px;color:#e2e2e2;">L</div>
<div style="position:absolute;left:1362px;top:240px;width:1px;height:23px;background:#3c3c3c;"></div>
<div class="t" style="left:1316.46px;top:245.73px;font-size:14.500px;color:#e2e2e2;">M</div>
<div style="position:absolute;left:1440px;top:240px;width:1px;height:23px;background:#3c3c3c;"></div>
<div class="t" style="left:1395.76px;top:245.73px;font-size:14.500px;color:#e2e2e2;">N</div>
<div style="position:absolute;left:1519px;top:240px;width:1px;height:23px;background:#3c3c3c;"></div>
<div class="t" style="left:1473.86px;top:245.73px;font-size:14.500px;color:#e2e2e2;">O</div>
<div style="position:absolute;left:1597px;top:240px;width:1px;height:23px;background:#3c3c3c;"></div>
<div class="t" style="left:1553.16px;top:245.73px;font-size:14.500px;color:#e2e2e2;">P</div>
<div style="position:absolute;left:1675px;top:240px;width:1px;height:23px;background:#3c3c3c;"></div>
<div class="t" style="left:1630.36px;top:245.73px;font-size:14.500px;color:#e2e2e2;">Q</div>
<div style="position:absolute;left:24px;top:240px;width:1px;height:23px;background:#3c3c3c;"></div>
<div style="position:absolute;left:0px;top:262px;width:24px;height:1px;background:#3c3c3c;"></div>
<div style="position:absolute;left:0px;top:295px;width:24px;height:1px;background:#3c3c3c;"></div>
<div class="t" style="left:4.57px;top:277.23px;font-size:14.500px;color:#e2e2e2;">1</div>
<div style="position:absolute;left:0px;top:327px;width:24px;height:1px;background:#3c3c3c;"></div>
<div class="t" style="left:4.57px;top:309.23px;font-size:14.500px;color:#e2e2e2;">2</div>
<div style="position:absolute;left:0px;top:359px;width:24px;height:1px;background:#3c3c3c;"></div>
<div class="t" style="left:4.57px;top:341.23px;font-size:14.500px;color:#e2e2e2;">3</div>
<div style="position:absolute;left:0px;top:391px;width:24px;height:1px;background:#3c3c3c;"></div>
<div class="t" style="left:4.57px;top:373.23px;font-size:14.500px;color:#e2e2e2;">4</div>
<div style="position:absolute;left:0px;top:423px;width:24px;height:1px;background:#3c3c3c;"></div>
<div class="t" style="left:4.57px;top:405.23px;font-size:14.500px;color:#e2e2e2;">5</div>
<div style="position:absolute;left:0px;top:455px;width:24px;height:1px;background:#3c3c3c;"></div>
<div class="t" style="left:4.57px;top:437.23px;font-size:14.500px;color:#e2e2e2;">6</div>
<div style="position:absolute;left:0px;top:487px;width:24px;height:1px;background:#3c3c3c;"></div>
<div class="t" style="left:4.57px;top:469.23px;font-size:14.500px;color:#e2e2e2;">7</div>
<div style="position:absolute;left:0px;top:558px;width:24px;height:1px;background:#3c3c3c;"></div>
<div class="t" style="left:4.57px;top:540.23px;font-size:14.500px;color:#e2e2e2;">8</div>
<div style="position:absolute;left:0px;top:590px;width:24px;height:1px;background:#3c3c3c;"></div>
<div class="t" style="left:4.57px;top:572.23px;font-size:14.500px;color:#e2e2e2;">9</div>
<div style="position:absolute;left:0px;top:622px;width:24px;height:1px;background:#3c3c3c;"></div>
<div class="t" style="left:0.54px;top:604.23px;font-size:14.500px;color:#e2e2e2;">10</div>
<div style="position:absolute;left:0px;top:654px;width:24px;height:1px;background:#3c3c3c;"></div>
<div class="t" style="left:1.07px;top:636.23px;font-size:14.500px;color:#e2e2e2;">11</div>
<div style="position:absolute;left:0px;top:686px;width:24px;height:1px;background:#3c3c3c;"></div>
<div class="t" style="left:0.54px;top:668.23px;font-size:14.500px;color:#e2e2e2;">12</div>
<div style="position:absolute;left:0px;top:709px;width:24px;height:1px;background:#3c3c3c;"></div>
<div class="t" style="left:0.54px;top:691.23px;font-size:14.500px;color:#e2e2e2;">13</div>
<div style="position:absolute;left:0px;top:741px;width:24px;height:1px;background:#3c3c3c;"></div>
<div class="t" style="left:0.54px;top:723.23px;font-size:14.500px;color:#e2e2e2;">14</div>
<div style="position:absolute;left:0px;top:773px;width:24px;height:1px;background:#3c3c3c;"></div>
<div class="t" style="left:0.54px;top:755.23px;font-size:14.500px;color:#e2e2e2;">15</div>
<div style="position:absolute;left:0px;top:805px;width:24px;height:1px;background:#3c3c3c;"></div>
<div class="t" style="left:0.54px;top:787.23px;font-size:14.500px;color:#e2e2e2;">16</div>
<div style="position:absolute;left:0px;top:837px;width:24px;height:1px;background:#3c3c3c;"></div>
<div class="t" style="left:0.54px;top:819.23px;font-size:14.500px;color:#e2e2e2;">17</div>
<div style="position:absolute;left:0px;top:849px;width:24px;height:1px;background:#3c3c3c;"></div>
<div style="position:absolute;left:24px;top:263px;width:1655px;height:586px;background:#fff;"></div>
<div style="position:absolute;left:102px;top:263px;width:1px;height:586px;background:#e1e1e1;"></div>
<div style="position:absolute;left:233px;top:263px;width:1px;height:225px;background:#e1e1e1;"></div>
<div style="position:absolute;left:233px;top:559px;width:1px;height:290px;background:#e1e1e1;"></div>
<div style="position:absolute;left:381px;top:263px;width:1px;height:586px;background:#e1e1e1;"></div>
<div style="position:absolute;left:460px;top:263px;width:1px;height:586px;background:#e1e1e1;"></div>
<div style="position:absolute;left:608px;top:263px;width:1px;height:225px;background:#e1e1e1;"></div>
<div style="position:absolute;left:608px;top:559px;width:1px;height:64px;background:#e1e1e1;"></div>
<div style="position:absolute;left:608px;top:655px;width:1px;height:32px;background:#e1e1e1;"></div>
<div style="position:absolute;left:608px;top:774px;width:1px;height:75px;background:#e1e1e1;"></div>
<div style="position:absolute;left:745px;top:263px;width:1px;height:447px;background:#e1e1e1;"></div>
<div style="position:absolute;left:745px;top:774px;width:1px;height:75px;background:#e1e1e1;"></div>
<div style="position:absolute;left:824px;top:263px;width:1px;height:479px;background:#e1e1e1;"></div>
<div style="position:absolute;left:824px;top:774px;width:1px;height:75px;background:#e1e1e1;"></div>
<div style="position:absolute;left:902px;top:263px;width:1px;height:479px;background:#e1e1e1;"></div>
<div style="position:absolute;left:902px;top:774px;width:1px;height:75px;background:#e1e1e1;"></div>
<div style="position:absolute;left:981px;top:263px;width:1px;height:65px;background:#e1e1e1;"></div>
<div style="position:absolute;left:981px;top:456px;width:1px;height:393px;background:#e1e1e1;"></div>
<div style="position:absolute;left:1127px;top:263px;width:1px;height:97px;background:#e1e1e1;"></div>
<div style="position:absolute;left:1127px;top:456px;width:1px;height:393px;background:#e1e1e1;"></div>
<div style="position:absolute;left:1205px;top:263px;width:1px;height:97px;background:#e1e1e1;"></div>
<div style="position:absolute;left:1205px;top:456px;width:1px;height:393px;background:#e1e1e1;"></div>
<div style="position:absolute;left:1283px;top:263px;width:1px;height:97px;background:#e1e1e1;"></div>
<div style="position:absolute;left:1283px;top:456px;width:1px;height:393px;background:#e1e1e1;"></div>
<div style="position:absolute;left:1362px;top:263px;width:1px;height:129px;background:#e1e1e1;"></div>
<div style="position:absolute;left:1362px;top:456px;width:1px;height:393px;background:#e1e1e1;"></div>
<div style="position:absolute;left:1440px;top:263px;width:1px;height:129px;background:#e1e1e1;"></div>
<div style="position:absolute;left:1440px;top:456px;width:1px;height:393px;background:#e1e1e1;"></div>
<div style="position:absolute;left:1519px;top:263px;width:1px;height:129px;background:#e1e1e1;"></div>
<div style="position:absolute;left:1519px;top:424px;width:1px;height:425px;background:#e1e1e1;"></div>
<div style="position:absolute;left:1597px;top:263px;width:1px;height:129px;background:#e1e1e1;"></div>
<div style="position:absolute;left:1597px;top:424px;width:1px;height:425px;background:#e1e1e1;"></div>
<div style="position:absolute;left:1675px;top:263px;width:1px;height:586px;background:#e1e1e1;"></div>
<div style="position:absolute;left:24px;top:295px;width:1655px;height:1px;background:#e1e1e1;"></div>
<div style="position:absolute;left:24px;top:327px;width:1655px;height:1px;background:#e1e1e1;"></div>
<div style="position:absolute;left:24px;top:359px;width:1655px;height:1px;background:#e1e1e1;"></div>
<div style="position:absolute;left:24px;top:391px;width:1655px;height:1px;background:#e1e1e1;"></div>
<div style="position:absolute;left:24px;top:423px;width:1655px;height:1px;background:#e1e1e1;"></div>
<div style="position:absolute;left:24px;top:455px;width:1655px;height:1px;background:#e1e1e1;"></div>
<div style="position:absolute;left:24px;top:487px;width:1655px;height:1px;background:#e1e1e1;"></div>
<div style="position:absolute;left:24px;top:558px;width:1655px;height:1px;background:#e1e1e1;"></div>
<div style="position:absolute;left:24px;top:590px;width:1655px;height:1px;background:#e1e1e1;"></div>
<div style="position:absolute;left:24px;top:622px;width:1655px;height:1px;background:#e1e1e1;"></div>
<div style="position:absolute;left:24px;top:654px;width:1655px;height:1px;background:#e1e1e1;"></div>
<div style="position:absolute;left:24px;top:686px;width:1655px;height:1px;background:#e1e1e1;"></div>
<div style="position:absolute;left:24px;top:709px;width:1655px;height:1px;background:#e1e1e1;"></div>
<div style="position:absolute;left:24px;top:741px;width:1655px;height:1px;background:#e1e1e1;"></div>
<div style="position:absolute;left:24px;top:773px;width:1655px;height:1px;background:#e1e1e1;"></div>
<div style="position:absolute;left:24px;top:805px;width:1655px;height:1px;background:#e1e1e1;"></div>
<div style="position:absolute;left:24px;top:837px;width:1655px;height:1px;background:#e1e1e1;"></div>
<div style="position:absolute;left:233px;top:261.5px;width:148px;height:2.1000000000000227px;background:#1f5f3c;"></div>
<div style="position:absolute;left:22.5px;top:327px;width:2.1000000000000014px;height:32px;background:#1f5f3c;"></div>
<div style="position:absolute;left:103px;top:328px;width:130px;height:96px;background:#d6dce4;"></div>
<div style="position:absolute;left:233px;top:328px;width:148px;height:64px;background:#d0cece;"></div>
<div style="position:absolute;left:233px;top:392px;width:148px;height:32px;background:#fff;"></div>
<div style="position:absolute;left:460px;top:328px;width:148px;height:96px;background:#d6dce4;"></div>
<div style="position:absolute;left:608px;top:328px;width:137px;height:32px;background:#d0cece;"></div>
<div style="position:absolute;left:608px;top:360px;width:137px;height:64px;background:#fff;"></div>
<div style="position:absolute;left:102px;top:327.5px;width:280.0px;height:1.6000000000000227px;background:#1a1a1a;"></div>
<div style="position:absolute;left:102px;top:359.5px;width:280.0px;height:1.6000000000000227px;background:#1a1a1a;"></div>
<div style="position:absolute;left:102px;top:391.5px;width:280.0px;height:1.6000000000000227px;background:#1a1a1a;"></div>
<div style="position:absolute;left:102px;top:423px;width:280.0px;height:1.6000000000000227px;background:#1a1a1a;"></div>
<div style="position:absolute;left:102px;top:327.5px;width:1.5999999999999943px;height:97.10000000000002px;background:#1a1a1a;"></div>
<div style="position:absolute;left:232.5px;top:327.5px;width:1.5999999999999943px;height:97.10000000000002px;background:#1a1a1a;"></div>
<div style="position:absolute;left:380.5px;top:327.5px;width:1.6000000000000227px;height:97.10000000000002px;background:#1a1a1a;"></div>
<div style="position:absolute;left:459px;top:327.5px;width:286.5px;height:1.6000000000000227px;background:#1a1a1a;"></div>
<div style="position:absolute;left:459px;top:359.5px;width:286.5px;height:1.6000000000000227px;background:#1a1a1a;"></div>
<div style="position:absolute;left:459px;top:391.5px;width:286.5px;height:1.6000000000000227px;background:#1a1a1a;"></div>
<div style="position:absolute;left:459px;top:423px;width:286.5px;height:1.6000000000000227px;background:#1a1a1a;"></div>
<div style="position:absolute;left:459px;top:327.5px;width:1.6000000000000227px;height:97.10000000000002px;background:#1a1a1a;"></div>
<div style="position:absolute;left:607px;top:327.5px;width:1.6000000000000227px;height:97.10000000000002px;background:#1a1a1a;"></div>
<div style="position:absolute;left:744px;top:327.5px;width:1.6000000000000227px;height:97.10000000000002px;background:#1a1a1a;"></div>
<div class="t" style="left:106.00px;top:336.10px;font-size:17.006px;color:#000;font-weight:bold;transform:scaleX(0.9023);transform-origin:0 0;-webkit-text-stroke:0.35px #000;">No. of Units Sold</div>
<div class="t" style="left:158.90px;top:367.60px;font-size:17.006px;color:#000;font-weight:bold;transform:scaleX(0.8906);transform-origin:0 0;-webkit-text-stroke:0.35px #000;">Unit Price</div>
<div class="t" style="left:167.40px;top:399.40px;font-size:17.006px;color:#000;font-weight:bold;transform:scaleX(0.8774);transform-origin:0 0;-webkit-text-stroke:0.35px #000;">Revenue</div>
<div class="t" style="left:352.50px;top:337.71px;font-size:15.104px;color:#000;-webkit-text-stroke:0.22px #000;">160</div>
<div class="t" style="left:309.19px;top:369.13px;font-size:15.2px;color:#000;-webkit-text-stroke:0.22px #000;">P2,556.29</div>
<div style="position:absolute;left:307.7px;top:374.2px;width:11.100000000000023px;height:1.3000000000000114px;background:#000;"></div>
<div style="position:absolute;left:307.7px;top:376.7px;width:11.100000000000023px;height:1.3000000000000114px;background:#000;"></div>
<div class="t" style="left:292.29px;top:400.93px;font-size:15.2px;color:#000;-webkit-text-stroke:0.22px #000;">P409,006.75</div>
<div style="position:absolute;left:290.8px;top:406.0px;width:11.099999999999966px;height:1.3000000000000114px;background:#000;"></div>
<div style="position:absolute;left:290.8px;top:408.5px;width:11.099999999999966px;height:1.3000000000000114px;background:#000;"></div>
<div class="t" style="left:507.10px;top:336.10px;font-size:17.006px;color:#000;font-weight:bold;transform:scaleX(0.9151);transform-origin:0 0;-webkit-text-stroke:0.35px #000;">Cost per Unit</div>
<div class="t" style="left:530.50px;top:367.60px;font-size:17.006px;color:#000;font-weight:bold;transform:scaleX(0.9075);transform-origin:0 0;-webkit-text-stroke:0.35px #000;">Total Cost</div>
<div class="t" style="left:551.70px;top:399.40px;font-size:17.006px;color:#000;font-weight:bold;transform:scaleX(0.8919);transform-origin:0 0;-webkit-text-stroke:0.35px #000;">Income</div>
<div class="t" style="left:673.69px;top:337.63px;font-size:15.2px;color:#000;-webkit-text-stroke:0.22px #000;">P1,851.66</div>
<div style="position:absolute;left:672.2px;top:342.7px;width:11.099999999999909px;height:1.3000000000000114px;background:#000;"></div>
<div style="position:absolute;left:672.2px;top:345.2px;width:11.099999999999909px;height:1.3000000000000114px;background:#000;"></div>
<div class="t" style="left:656.79px;top:369.13px;font-size:15.2px;color:#000;-webkit-text-stroke:0.22px #000;">P296,266.34</div>
<div style="position:absolute;left:655.3px;top:374.2px;width:11.100000000000023px;height:1.3000000000000114px;background:#000;"></div>
<div style="position:absolute;left:655.3px;top:376.7px;width:11.100000000000023px;height:1.3000000000000114px;background:#000;"></div>
<div class="t" style="left:657.92px;top:400.93px;font-size:15.2px;color:#000;-webkit-text-stroke:0.22px #000;">P112,740.42</div>
<div style="position:absolute;left:656.4px;top:406.0px;width:11.100000000000023px;height:1.3000000000000114px;background:#000;"></div>
<div style="position:absolute;left:656.4px;top:408.5px;width:11.100000000000023px;height:1.3000000000000114px;background:#000;"></div>
<div class="t" style="left:106.20px;top:463.08px;font-size:17.151px;color:#000;font-weight:bold;transform:scaleX(0.9300);transform-origin:0 0;-webkit-text-stroke:0.35px #000;">What if?</div>
<div class="t" style="left:107.90px;top:490.61px;font-size:17.239px;color:#000;-webkit-text-stroke:0.22px #000;">I want to know how many units do I</div>
<div class="t" style="left:132.70px;top:513.97px;font-size:16.458px;color:#000;-webkit-text-stroke:0.22px #000;">need to sell to get a P600,000</div>
<div class="t" style="left:208.00px;top:537.24px;font-size:16.139px;color:#000;-webkit-text-stroke:0.22px #000;">revenue?</div>
<div class="t" style="left:463.90px;top:463.08px;font-size:17.151px;color:#000;font-weight:bold;transform:scaleX(0.9152);transform-origin:0 0;-webkit-text-stroke:0.35px #000;">What if?</div>
<div class="t" style="left:474.50px;top:490.78px;font-size:17.029px;color:#000;-webkit-text-stroke:0.22px #000;">I want to know how much cost per</div>
<div class="t" style="left:485.90px;top:513.32px;font-size:17.224px;color:#000;-webkit-text-stroke:0.22px #000;">unit do I need, in order to get a</div>
<div class="t" style="left:536.80px;top:537.55px;font-size:15.771px;color:#000;-webkit-text-stroke:0.22px #000;">P200,000 Income?</div>
<div class="t" style="left:463.80px;top:599.08px;font-size:17.151px;color:#000;font-weight:bold;transform:scaleX(0.9123);transform-origin:0 0;-webkit-text-stroke:0.35px #000;">What if?</div>
<div class="t" style="left:467.50px;top:634.76px;font-size:16.466px;color:#000;-webkit-text-stroke:0.22px #000;">- Income must be 200,000</div>
<div class="t" style="left:463.80px;top:666.28px;font-size:17.151px;color:#000;font-weight:bold;transform:scaleX(0.8644);transform-origin:0 0;-webkit-text-stroke:0.35px #000;">But</div>
<div class="t" style="left:467.50px;top:689.63px;font-size:16.616px;color:#000;-webkit-text-stroke:0.22px #000;">- Unit Price must not exceed 3,000</div>
<div class="t" style="left:467.50px;top:722.04px;font-size:16.729px;color:#000;-webkit-text-stroke:0.22px #000;">- Unit Price must not be less than 2,000</div>
<div class="t" style="left:467.50px;top:754.01px;font-size:16.997px;color:#000;-webkit-text-stroke:0.22px #000;">- Make sure to use whole numbers on the no. of units sold</div>
<div class="t" style="left:906.00px;top:336.17px;font-size:17.522px;color:#000;font-weight:bold;-webkit-text-stroke:0.35px #000;">Terms to remember :</div>
<div class="t" style="left:1212.60px;top:368.93px;font-size:16.508px;color:#000;-webkit-text-stroke:0.22px #000;">to create a goal</div>
<div class="t" style="left:1203.33px;top:400.76px;font-size:16.820px;color:#000;-webkit-text-stroke:0.22px #000;">ent or value which will be placed on the Target Cell ( Set Cell)</div>
<div class="t" style="left:1207.79px;top:435.91px;font-size:17.000px;color:#000;-webkit-text-stroke:0.22px #000;">Automated to get the Goal Value</div>
<svg style="position:absolute;left:232px;top:326px;overflow:visible;" width="151" height="36" viewBox="0 0 151 36"><rect x="1.5" y="1.5" width="148" height="33" fill="none" stroke="#217346" stroke-width="3"/><rect x="1.5" y="1.5" width="148" height="33" fill="none" stroke="#fff" stroke-width="1" stroke-dasharray="2 4"/><rect x="146" y="31" width="5" height="5" fill="#217346"/></svg>
<div style="position:absolute;left:961px;top:356px;width:251px;height:167px;background:#f0f0f0;border:1px solid #d0d0d0;border-radius:8px;box-sizing:border-box;box-shadow:0 16px 50px rgba(0,0,0,0.32),0 3px 10px rgba(0,0,0,0.14);"></div>
<div class="t" style="left:970.00px;top:367.26px;font-size:12.571px;color:#1b1b1b;">Goal Seek</div>
<div class="t" style="left:1130.00px;top:366.47px;font-size:13.500px;color:#1b1b1b;">?</div>
<svg style="position:absolute;left:1179px;top:367px;overflow:visible;" width="13" height="12" viewBox="0 0 13 12"><path d="M0.5 0.5 L12 11.5 M12 0.5 L0.5 11.5" stroke="#333" stroke-width="1.1"/></svg>
<div class="t" style="left:969.30px;top:403.90px;font-size:11.104px;color:#1b1b1b;">Set cell:</div>
<div class="t" style="left:969.30px;top:429.93px;font-size:11.418px;color:#1b1b1b;">To value:</div>
<div class="t" style="left:969.30px;top:457.02px;font-size:11.204px;color:#1b1b1b;">By changing cell:</div>
<div style="position:absolute;left:975.5px;top:414.5px;width:5.5px;height:1.0px;background:#1b1b1b;"></div>
<div style="position:absolute;left:986px;top:441px;width:6.5px;height:1px;background:#1b1b1b;"></div>
<div style="position:absolute;left:985px;top:468px;width:6px;height:1px;background:#1b1b1b;"></div>
<div style="position:absolute;left:1067px;top:397px;width:136px;height:24px;background:#fff;border:1px solid #c4c4c4;box-sizing:border-box;"></div>
<div style="position:absolute;left:1067px;top:424px;width:136px;height:24px;background:#fff;border:1px solid #c4c4c4;box-sizing:border-box;"></div>
<div style="position:absolute;left:1067px;top:451px;width:136px;height:23px;background:#fff;border:1px solid #c4c4c4;box-sizing:border-box;"></div>
<div style="position:absolute;left:1179px;top:398px;width:23px;height:21px;background:#fbfbfb;border:1px solid #d2d2d2;border-radius:3px;box-sizing:border-box;"></div>
<svg style="position:absolute;left:1185px;top:402px;overflow:visible;" width="11" height="13" viewBox="0 0 11 13"><path d="M5.5 0.5 L10.5 6 H7.3 V10 H3.7 V6 H0.5 Z" fill="#111"/><rect x="0.5" y="11.3" width="10" height="1.5" fill="#111"/></svg>
<div style="position:absolute;left:1179px;top:452px;width:23px;height:21px;background:#fbfbfb;border:1px solid #d2d2d2;border-radius:3px;box-sizing:border-box;"></div>
<svg style="position:absolute;left:1185px;top:456px;overflow:visible;" width="11" height="13" viewBox="0 0 11 13"><path d="M5.5 0.5 L10.5 6 H7.3 V10 H3.7 V6 H0.5 Z" fill="#111"/><rect x="0.5" y="11.3" width="10" height="1.5" fill="#111"/></svg>
<div style="position:absolute;left:1071px;top:401px;width:14px;height:15px;background:#c8c8c8;"></div>
<div class="t" style="left:1072.00px;top:402.72px;font-size:12.500px;color:#333;">C3</div>
<div style="position:absolute;left:989px;top:487px;width:101px;height:26px;background:#fdfdfd;border:1px solid #2a5ea8;box-shadow:inset 0 0 0 1px #7fa6d6;border-radius:4px;box-sizing:border-box;"></div>
<div class="t" style="left:1031.60px;top:495.88px;font-size:10.659px;color:#1b1b1b;">OK</div>
<div style="position:absolute;left:1103px;top:487px;width:99px;height:26px;background:#fdfdfd;border:1px solid #d0d0d0;border-radius:4px;box-sizing:border-box;"></div>
<div class="t" style="left:1135.80px;top:495.76px;font-size:10.794px;color:#1b1b1b;">Cancel</div>
<div style="position:absolute;left:1026px;top:400px;width:65.5px;height:65.5px;border-radius:50%;background:rgba(105,218,244,0.82);"></div>
<svg style="position:absolute;left:1058px;top:432px;overflow:visible;" width="18" height="27" viewBox="0 0 18 27"><path d="M1 1 V20 L5.5 15.5 L9 23.5 L12 22 L8.6 14.3 H15 Z" fill="#fff" stroke="#555" stroke-width="1.1" stroke-linejoin="round"/></svg>
<div style="position:absolute;left:1679px;top:240px;width:16px;height:609px;background:#0d0d0d;"></div>
<div style="position:absolute;left:1682px;top:243px;width:13px;height:605px;background:#171717;border-radius:6px;"></div>
<svg style="position:absolute;left:1686px;top:246px;overflow:visible;" width="9" height="7" viewBox="0 0 9 7"><path d="M4.5 0 L9 7 H0 Z" fill="#9a9a9a"/></svg>
<div style="position:absolute;left:1686px;top:259px;width:9px;height:488px;background:#9d9d9d;border-radius:4.5px;"></div>
<svg style="position:absolute;left:1686px;top:839px;overflow:visible;" width="9" height="7" viewBox="0 0 9 7"><path d="M0 0 H9 L4.5 7 Z" fill="#9a9a9a"/></svg>
<div style="position:absolute;left:105px;top:849px;width:95px;height:9px;background:#fff;"></div>
<div style="position:absolute;left:0px;top:849px;width:117.5px;height:35px;background:#0b0b0b;border-top-right-radius:6px;"></div>
<div style="position:absolute;left:187px;top:849px;width:1508px;height:35px;background:#0b0b0b;border-top-left-radius:6px;"></div>
<svg style="position:absolute;left:20px;top:861px;overflow:visible;" width="8" height="11" viewBox="0 0 8 11"><path d="M7 0.5 L1 5.5 L7 10.5" stroke="#8a8a8a" stroke-width="1.2" fill="none"/></svg>
<svg style="position:absolute;left:57px;top:861px;overflow:visible;" width="8" height="11" viewBox="0 0 8 11"><path d="M1 0.5 L7 5.5 L1 10.5" stroke="#8a8a8a" stroke-width="1.2" fill="none"/></svg>
<div style="position:absolute;left:117px;top:849px;width:70px;height:31px;background:#fff;border-radius:0 0 5px 5px;"></div>
<div class="t" style="left:127.00px;top:855.21px;font-size:16.291px;color:#1a1a1a;">What If</div>
<div style="position:absolute;left:126.6px;top:875.6px;width:51.400000000000006px;height:2.0px;background:#0f4f2c;border-radius:1px;"></div>
<div style="position:absolute;left:191px;top:856px;width:1.5px;height:21px;background:#4a4a4a;"></div>
<div class="t" style="left:207.00px;top:860.18px;font-size:14.676px;color:#f2f2f2;">Solver</div>
<div style="position:absolute;left:263px;top:856px;width:1px;height:21px;background:#555;"></div>
<svg style="position:absolute;left:310px;top:860px;overflow:visible;" width="13" height="13" viewBox="0 0 13 13"><path d="M6.5 0 V13 M0 6.5 H13" stroke="#e8e8e8" stroke-width="1.3"/></svg>
<div style="position:absolute;left:1020px;top:861.5px;width:3px;height:3.0px;background:#f0f0f0;"></div>
<div style="position:absolute;left:1020px;top:866px;width:3px;height:3px;background:#f0f0f0;"></div>
<div style="position:absolute;left:1020px;top:870.5px;width:3px;height:3.0px;background:#f0f0f0;"></div>
<div style="position:absolute;left:1040px;top:857px;width:642px;height:19px;background:#161616;border-radius:9px;"></div>
<svg style="position:absolute;left:1045px;top:862px;overflow:visible;" width="8" height="9" viewBox="0 0 8 9"><path d="M8 0 V9 L0 4.5 Z" fill="#9a9a9a"/></svg>
<div style="position:absolute;left:1058px;top:861px;width:570px;height:10px;background:#9d9d9d;border-radius:5px;"></div>
<svg style="position:absolute;left:1668px;top:862px;overflow:visible;" width="8" height="9" viewBox="0 0 8 9"><path d="M0 0 V9 L8 4.5 Z" fill="#9a9a9a"/></svg>
<div style="position:absolute;left:0px;top:884px;width:1695px;height:2px;background:#2a2a2a;"></div>
<div style="position:absolute;left:0px;top:886px;width:1695px;height:18px;background:#161616;"></div>
<div class="t" style="left:1.60px;top:892.12px;font-size:10.968px;color:#d4d4d4;">Point</div>
<svg style="position:absolute;left:54px;top:890px;overflow:visible;" width="17" height="14" viewBox="0 0 17 14"><path d="M1 14 V0.8 H15.5 V6" fill="none" stroke="#d0d0d0" stroke-width="1.4"/><rect x="1" y="0.8" width="14.5" height="2.6" fill="#d0d0d0"/><path d="M3 6.5 H6 M3 9.5 H5.5 M3 12.5 H5" stroke="#d0d0d0" stroke-width="1.3"/><circle cx="11.3" cy="10" r="4.6" fill="#161616" stroke="#d0d0d0" stroke-width="1.4"/><circle cx="11.3" cy="10" r="2" fill="#d0d0d0"/></svg>
<svg style="position:absolute;left:90px;top:889px;overflow:visible;" width="17" height="15" viewBox="0 0 17 15"><circle cx="7.5" cy="1.8" r="1.6" fill="none" stroke="#d0d0d0" stroke-width="1.2"/><path d="M1 4.5 C2 6 4.5 6.5 7.5 6.5 C10.5 6.5 13 6 14 4.5" fill="none" stroke="#d0d0d0" stroke-width="1.3"/><path d="M5 6.5 V9.5 L3.5 14.5 M10 6.5 V9" fill="none" stroke="#d0d0d0" stroke-width="1.3"/><path d="M7.5 12 L10 14.5 L16 8.5" fill="none" stroke="#d0d0d0" stroke-width="1.4"/></svg>
<div class="t" style="left:110.00px;top:891.47px;font-size:11.726px;color:#d4d4d4;">Accessibility: Good to go</div>
<svg style="position:absolute;left:1385px;top:889px;overflow:visible;" width="16" height="15" viewBox="0 0 16 15"><path d="M0.5 0.5 H15.5 V15 H0.5 Z M5.5 0.5 V15 M10.5 0.5 V15 M0.5 5.3 H15.5 M0.5 10.2 H15.5" fill="none" stroke="#7a7a7a" stroke-width="1.2"/></svg>
<svg style="position:absolute;left:1430px;top:889px;overflow:visible;" width="16" height="15" viewBox="0 0 16 15"><rect x="0.6" y="0.6" width="15" height="14.5" fill="none" stroke="#7a7a7a" stroke-width="1.2"/><rect x="3.5" y="3" width="9" height="12" fill="none" stroke="#7a7a7a" stroke-width="1"/><path d="M5.5 6 H10.5 M5.5 8.5 H10.5 M5.5 11 H10.5" stroke="#7a7a7a" stroke-width="0.9"/></svg>
<svg style="position:absolute;left:1474px;top:889px;overflow:visible;" width="16" height="15" viewBox="0 0 16 15"><path d="M0.6 15 V0.6 H15.4 V15 M0.6 9 H15.4 M5.5 0.6 V9 M9.5 0.6 V9" fill="none" stroke="#7a7a7a" stroke-width="1.2"/></svg>
<div style="position:absolute;left:1511px;top:896px;width:9px;height:1px;background:#6a6a6a;"></div>
<div style="position:absolute;left:1525px;top:897px;width:112px;height:1px;background:#bdbdbd;"></div>
<div style="position:absolute;left:1580px;top:893px;width:1px;height:8px;background:#d0d0d0;"></div>
<svg style="position:absolute;left:1642px;top:893px;overflow:visible;" width="9" height="9" viewBox="0 0 9 9"><path d="M4.5 0 V9 M0 4.5 H9" stroke="#6a6a6a" stroke-width="1"/></svg>
<div class="t" style="left:1665.40px;top:891.69px;font-size:10.993px;color:#6a6a6a;">110%</div>
</body></html>
